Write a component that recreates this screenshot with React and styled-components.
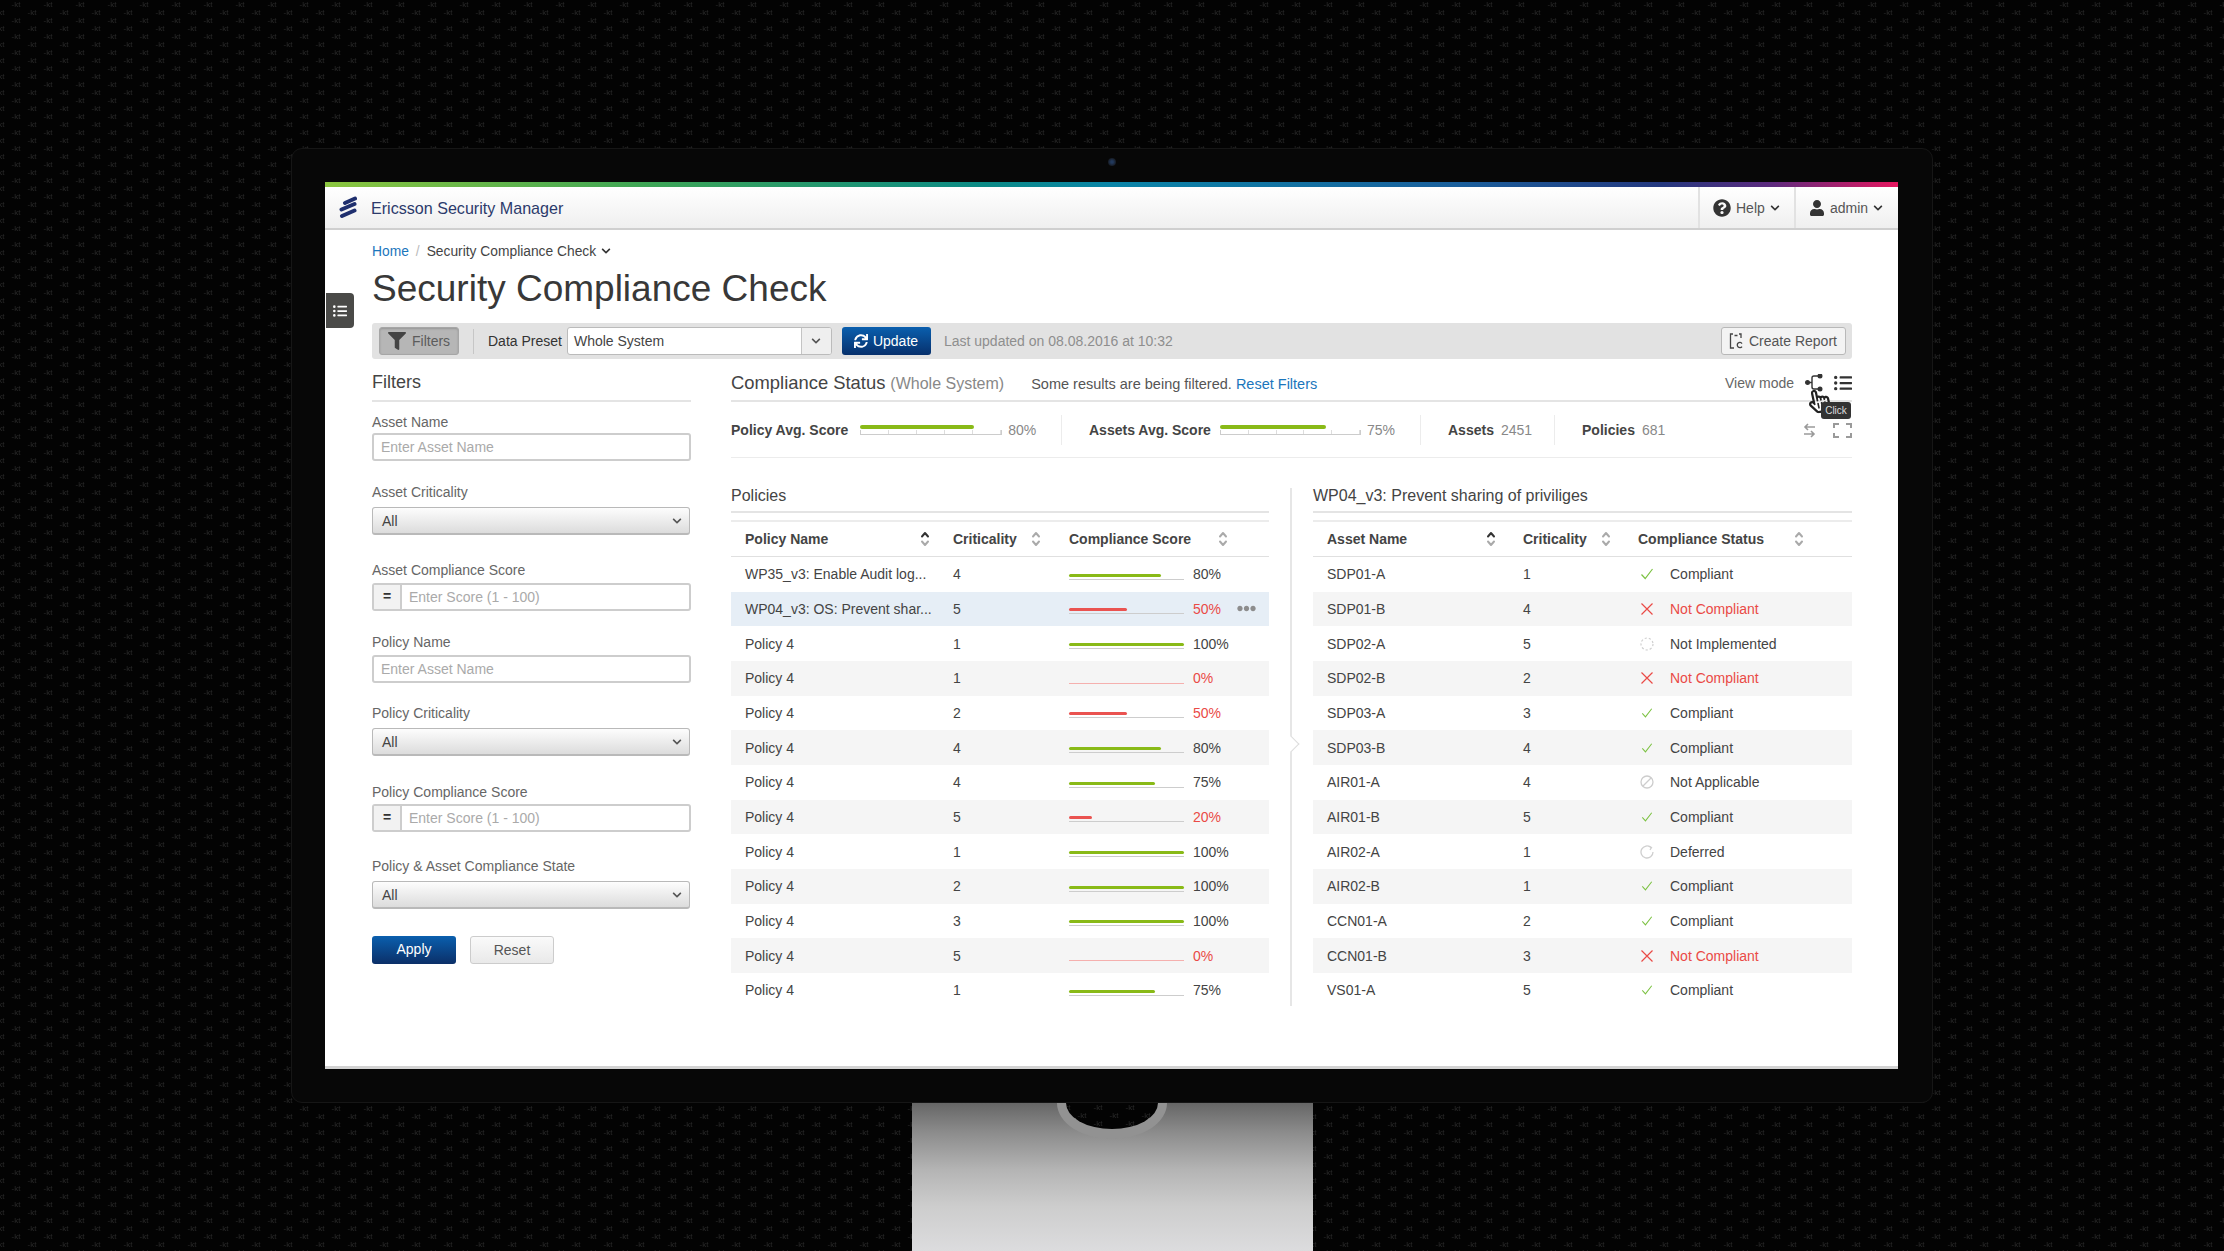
import React from "react";
import styled, { createGlobalStyle } from "styled-components";
import {
  FaChevronDown,
  FaEllipsisH,
  FaFilter,
  FaListUl,
  FaQuestionCircle,
  FaRegHandPointer,
  FaSync,
  FaUser,
} from "react-icons/fa";

const tile = `<svg xmlns="http://www.w3.org/2000/svg" width="32" height="16"><g font-family="Liberation Sans" font-size="8" fill="#282828" text-anchor="middle"><text x="0" y="11">-kt</text><text x="32" y="11">-kt</text><text x="16" y="3">-kt</text><text x="16" y="19">-kt</text></g></svg>`;
const pattern = `url("data:image/svg+xml,${encodeURIComponent(tile)}")`;

const policies = [
  ["WP35_v3: Enable Audit log...", 4, 80],
  ["WP04_v3: OS: Prevent shar...", 5, 50],
  ["Policy 4", 1, 100],
  ["Policy 4", 1, 0],
  ["Policy 4", 2, 50],
  ["Policy 4", 4, 80],
  ["Policy 4", 4, 75],
  ["Policy 4", 5, 20],
  ["Policy 4", 1, 100],
  ["Policy 4", 2, 100],
  ["Policy 4", 3, 100],
  ["Policy 4", 5, 0],
  ["Policy 4", 1, 75],
];

const assets = [
  ["SDP01-A", 1, "ok"],
  ["SDP01-B", 4, "bad"],
  ["SDP02-A", 5, "none"],
  ["SDP02-B", 2, "bad"],
  ["SDP03-A", 3, "ok"],
  ["SDP03-B", 4, "ok"],
  ["AIR01-A", 4, "na"],
  ["AIR01-B", 5, "ok"],
  ["AIR02-A", 1, "later"],
  ["AIR02-B", 1, "ok"],
  ["CCN01-A", 2, "ok"],
  ["CCN01-B", 3, "bad"],
  ["VS01-A", 5, "ok"],
];

const statusText = {
  ok: "Compliant",
  bad: "Not Compliant",
  none: "Not Implemented",
  na: "Not Applicable",
  later: "Deferred",
};

const GlobalStyle = createGlobalStyle`
  html, body {
    margin: 0;
    background: #030303;
    overflow: hidden;
  }
  * {
    box-sizing: border-box;
  }
  body {
    font-family: "Liberation Sans", Arial, sans-serif;
    font-size: 14px;
    color: #444;
  }
`;

const Backdrop = styled.div`
  width: 2224px;
  height: 1251px;
  overflow: hidden;
  padding-top: 148px;
  background-color: #030303;
  background-image: ${pattern};
  background-size: 32px 16px;
  background-position: 0 4px;
`;

const Monitor = styled.div`
  position: relative;
  width: 1642px;
  height: 955px;
  margin-left: 291px;
  padding: 33px;
  background: #070707;
  border: 1px solid #161616;
  border-radius: 11px;
`;

const Camera = styled.span`
  position: absolute;
  left: 816px;
  top: 9px;
  width: 8px;
  height: 8px;
  border-radius: 50%;
  background: radial-gradient(circle, #22395c 20%, #15181e 75%);
`;

const Stand = styled.div`
  position: relative;
  width: 401px;
  height: 148px;
  margin-left: 912px;
  overflow: hidden;
  background: linear-gradient(#666 0%, #8c8c8c 20%, #b4b4b4 45%, #cdcdcd 70%, #dcdcde 100%);
`;

const StandHole = styled.span`
  position: absolute;
  left: 145px;
  top: -36px;
  width: 110px;
  height: 72px;
  border-radius: 50%;
  border: solid #929292;
  border-width: 0 9px 10px;
  background-color: #030303;
  background-image: ${pattern};
  background-size: 32px 16px;
`;

const Screen = styled.div`
  width: 1573px;
  height: 887px;
  background: #fff;
  border-bottom: 3px solid #d2d2d2;
`;

const Rainbow = styled.div`
  height: 5px;
  background: linear-gradient(
    to right,
    #8cc63f 0%,
    #3fa655 20%,
    #0b8a86 42%,
    #0a85a8 50%,
    #1a5f9c 72%,
    #24387f 85%,
    #5d2a7e 92%,
    #e6175f 100%
  );
`;

const TopBar = styled.header`
  display: flex;
  align-items: center;
  height: 43px;
  background: linear-gradient(#fff, #efefef);
  border-bottom: 2px solid #cfcfcf;
`;

const LogoMark = styled.svg`
  width: 18px;
  height: 24px;
  margin-left: 14px;
`;

const Brand = styled.span`
  margin: 2px 0 0 14px;
  font-size: 16.1px;
  color: #2c3a6b;
`;

const TopMenu = styled.div`
  display: flex;
  align-items: center;
  gap: 5px;
  height: 100%;
  width: ${(p) => p.$width}px;
  padding-left: 13px;
  border-left: 2px solid #e2e2e2;
  color: #555;
  margin-left: ${(p) => (p.$first ? "auto" : "0")};
`;

const Content = styled.main`
  position: relative;
  padding: 11px 46px 0 47px;
`;

const SideTab = styled.div`
  position: absolute;
  left: 1px;
  top: 63px;
  width: 28px;
  height: 35px;
  display: flex;
  align-items: center;
  justify-content: center;
  background: #4a4a48;
  border-radius: 0 4px 4px 0;
  color: #fff;
`;

const Breadcrumb = styled.nav`
  display: flex;
  align-items: center;
  gap: 7px;
  height: 20px;
  font-size: 13.8px;
  color: #444;
`;

const Link = styled.span`
  color: #1b76bc;
`;

const Slash = styled.span`
  color: #bbb;
`;

const PageTitle = styled.h1`
  margin: 6px 0 0;
  font-size: 37px;
  line-height: 44px;
  font-weight: 400;
  color: #383838;
`;

const Toolbar = styled.div`
  display: flex;
  align-items: center;
  height: 36px;
  margin-top: 12px;
  padding-left: 7px;
  background: #e2e2e2;
  border-radius: 3px;
`;

const FilterToggle = styled.div`
  display: flex;
  align-items: center;
  gap: 6px;
  width: 80px;
  height: 28px;
  padding-left: 8px;
  background: #b6b6b6;
  border: 1px solid #a6a6a6;
  border-radius: 3px;
  box-shadow: inset 0 1px 2px rgba(0, 0, 0, 0.18);
  color: #5c5c5c;
  svg {
    color: #444;
  }
`;

const ToolDivider = styled.span`
  width: 1px;
  height: 25px;
  margin: 0 14px;
  background: #c6c6c6;
`;

const PresetLabel = styled.span`
  color: #333;
`;

const PresetSelect = styled.div`
  display: flex;
  align-items: center;
  width: 265px;
  height: 28px;
  margin-left: 5px;
  background: #fff;
  border: 1px solid #bbb;
  border-radius: 3px;
  overflow: hidden;
`;

const PresetValue = styled.span`
  flex: 1;
  padding-left: 6px;
`;

const PresetCaret = styled.span`
  display: flex;
  align-items: center;
  justify-content: center;
  width: 30px;
  height: 100%;
  background: #efefef;
  border-left: 1px solid #c4c4c4;
  color: #555;
`;

const UpdateButton = styled.div`
  display: flex;
  align-items: center;
  gap: 5px;
  width: 89px;
  height: 28px;
  margin-left: 10px;
  padding-left: 12px;
  background: linear-gradient(#0a5fae, #07306c);
  border-radius: 3px;
  color: #fff;
`;

const Updated = styled.span`
  margin-left: 13px;
  color: #8e8e8e;
`;

const ReportButton = styled.div`
  display: flex;
  align-items: center;
  gap: 5px;
  width: 125px;
  height: 28px;
  margin: 0 6px 0 auto;
  padding-left: 7px;
  background: #f3f3f3;
  border: 1px solid #b8b8b8;
  border-radius: 3px;
  color: #555;
`;

const Columns = styled.div`
  display: flex;
  gap: 40px;
`;

const FilterColumn = styled.aside`
  width: 319px;
  flex: none;
`;

const MainColumn = styled.section`
  flex: 1;
  min-width: 0;
`;

const SectionHead = styled.div`
  display: flex;
  align-items: baseline;
  height: 43px;
  padding: ${(p) => p.$top}px 0 0;
  border-bottom: 2px solid #e4e4e4;
`;

const SectionTitle = styled.h2`
  margin: 0;
  font-size: ${(p) => p.$size}px;
  line-height: 24px;
  font-weight: 400;
  color: #444;
`;

const SectionNote = styled.span`
  margin-left: 5px;
  font-size: 16px;
  color: #888;
`;

const FilterNotice = styled.span`
  margin-left: 27px;
  font-size: 14.5px;
  color: #555;
`;

const ViewMode = styled.div`
  position: relative;
  display: flex;
  align-items: center;
  align-self: center;
  margin: 0 0 6px auto;
  color: #666;
`;

const ViewIcon = styled.svg`
  width: 18px;
  height: 18px;
  margin-left: ${(p) => p.$gap}px;
  color: #333;
`;

const ListIcon = styled(FaListUl)`
  margin-left: 11px;
  color: #333;
  font-size: 18px;
`;

const Pointer = styled(FaRegHandPointer)`
  position: absolute;
  right: 21px;
  top: 15px;
  font-size: 24px;
  color: #222;
  background: transparent;
  transform: rotate(-12deg);
  z-index: 2;
`;

const Tip = styled.span`
  position: absolute;
  right: 1px;
  top: 28px;
  width: 30px;
  height: 17px;
  background: #333;
  border-radius: 3px;
  color: #ddd;
  font-size: 10px;
  line-height: 17px;
  text-align: center;
  z-index: 3;
`;

const Field = styled.div`
  margin-top: ${(p) => p.$top}px;
`;

const FieldLabel = styled.label`
  display: block;
  height: 16px;
  line-height: 16px;
  margin-bottom: ${(p) => p.$gap}px;
  color: #666;
`;

const TextInput = styled.input`
  display: block;
  width: 100%;
  height: 28px;
  padding: 0 7px;
  border: 2px solid #cdcdcd;
  border-radius: 3px;
  font: inherit;
  outline: none;
  &::placeholder {
    color: #aaa;
    opacity: 1;
  }
`;

const ScoreGroup = styled.div`
  display: flex;
  height: 28px;
  border: 2px solid #cdcdcd;
  border-radius: 3px;
`;

const ScoreOperator = styled.span`
  width: 28px;
  flex: none;
  background: #f2f2f2;
  border-right: 2px solid #cdcdcd;
  text-align: center;
  font-weight: 700;
  line-height: 23px;
  color: #333;
`;

const ScoreInput = styled.input`
  flex: 1;
  min-width: 0;
  padding: 0 7px;
  border: 0;
  background: transparent;
  font: inherit;
  outline: none;
  &::placeholder {
    color: #aaa;
    opacity: 1;
  }
`;

const SelectBox = styled.div`
  display: flex;
  align-items: center;
  justify-content: space-between;
  width: 318px;
  height: 28px;
  padding: 0 7px 0 9px;
  background: linear-gradient(#fdfdfd, #dcdcdc);
  border: 1px solid #b9b9b9;
  border-bottom-width: 2px;
  border-radius: 3px;
  color: #444;
`;

const FormActions = styled.div`
  display: flex;
  gap: 14px;
  margin-top: 27px;
`;

const ApplyButton = styled.div`
  width: 84px;
  height: 28px;
  background: linear-gradient(#0a5fae, #0b2f68);
  border-radius: 3px;
  color: #fff;
  text-align: center;
  line-height: 27px;
`;

const ResetButton = styled.div`
  width: 84px;
  height: 28px;
  background: linear-gradient(#fafafa, #e9e9e9);
  border: 1px solid #ccc;
  border-radius: 3px;
  color: #555;
  text-align: center;
  line-height: 27px;
`;

const StatRow = styled.div`
  display: flex;
  align-items: center;
  height: 56px;
  padding-top: 1px;
  border-bottom: 1px solid #ececec;
`;

const StatCell = styled.div`
  display: flex;
  align-items: center;
  height: 30px;
  width: ${(p) => p.$width}px;
  padding-left: ${(p) => p.$pad}px;
  border-right: ${(p) => (p.$line ? "1px solid #ececec" : "0")};
`;

const StatName = styled.b`
  color: #444;
`;

const StatValue = styled.span`
  margin-left: ${(p) => p.$gap}px;
  color: #888;
`;

const StatBar = styled.div`
  position: relative;
  width: ${(p) => p.$width}px;
  height: 10px;
  margin-left: ${(p) => p.$left}px;
`;

const StatFill = styled.div`
  height: 4px;
  background: #89ba17;
  border-radius: 2px;
`;

const StatAxis = styled.div`
  height: 5px;
  margin-top: 1px;
  border: 1px solid #ccc;
  border-top: 0;
  background: repeating-linear-gradient(to right, transparent 0, transparent calc(20% - 1px), #ddd calc(20% - 1px), #ddd 20%);
`;

const PanelTools = styled.div`
  display: flex;
  align-items: center;
  gap: 17px;
  height: 30px;
  margin-left: auto;
`;

const ToolIcon = styled.svg`
  display: block;
  height: 15px;
  width: ${(p) => p.$width}px;
  color: #9a9a9a;
`;

const PanelRow = styled.div`
  display: flex;
  padding-top: 28px;
`;

const Panel = styled.div`
  flex: none;
  width: ${(p) => p.$width}px;
`;

const PanelDivider = styled.div`
  position: relative;
  flex: none;
  width: 2px;
  height: 518px;
  margin: 2px 21px 0 21px;
  background: #e6e6e6;
`;

const DividerNotch = styled.span`
  position: absolute;
  left: -5px;
  top: 250px;
  width: 12px;
  height: 12px;
  background: #fff;
  border-top: 1px solid #ddd;
  border-right: 1px solid #ddd;
  transform: rotate(45deg);
`;

const PanelTitle = styled.h3`
  margin: 0;
  height: 27px;
  padding-bottom: 5px;
  border-bottom: 2px solid #e4e4e4;
  font-size: 16px;
  line-height: 20px;
  font-weight: 400;
  color: #444;
`;

const TableHead = styled.div`
  display: grid;
  grid-template-columns: ${(p) => p.$cols};
  align-items: center;
  height: 37px;
  margin-top: 7px;
  padding-left: 14px;
  border-top: 2px solid #ececec;
  border-bottom: 1px solid #e0e0e0;
`;

const HeadCell = styled.div`
  display: flex;
  align-items: center;
  justify-content: space-between;
  padding-right: ${(p) => p.$pr}px;
  font-weight: 700;
  color: #444;
`;

const TableRow = styled.div`
  display: grid;
  grid-template-columns: ${(p) => p.$cols};
  align-items: center;
  height: 34.67px;
  padding-left: 14px;
  background: ${(p) => (p.$active ? "#e6eef6" : p.$striped ? "#f5f5f5" : "#fff")};
`;

const ScoreCell = styled.div`
  display: flex;
  align-items: center;
`;

const MiniBar = styled.div`
  width: 115px;
  height: 6px;
  margin-top: 5px;
  border-bottom: 1.5px solid ${(p) => (p.$empty ? "#f5b0ae" : "#cdcdcd")};
`;

const MiniFill = styled.div`
  height: 3px;
  border-radius: 2px;
  background: ${(p) => (p.$low ? "#ea5350" : "#89ba17")};
`;

const Percent = styled.span`
  margin-left: 9px;
  color: ${(p) => (p.$low ? "#ea4a46" : "#444")};
`;

const RowDots = styled(FaEllipsisH)`
  margin: 0 13px 0 auto;
  font-size: 19px;
  color: #8d8d8d;
`;

const StatusCell = styled.div`
  display: flex;
  align-items: center;
  color: ${(p) => (p.$bad ? "#ea4a46" : "#444")};
`;

const StatusSlot = styled.span`
  display: flex;
  align-items: center;
  justify-content: center;
  flex: none;
  width: 18px;
  margin-right: 14px;
`;

const StatusIcon = styled.svg`
  width: ${(p) => p.$size}px;
  height: ${(p) => p.$size}px;
`;

const SortGlyph = styled.svg`
  width: 10px;
  height: 16px;
  flex: none;
`;

function SortIcon({ active }) {
  return (
    <SortGlyph viewBox="0 0 10 16" fill="none" strokeWidth="2" strokeLinecap="round" strokeLinejoin="round">
      <path d="M2 5.5 5 2 8 5.5" stroke={active ? "#333" : "#aaa"} />
      <path d="M2 10.5 5 14 8 10.5" stroke="#aaa" />
    </SortGlyph>
  );
}

function StatusGlyph({ kind, large }) {
  const common = { viewBox: "0 0 14 14", fill: "none", $size: large || kind !== "ok" ? 14 : 12 };
  if (kind === "ok") {
    return (
      <StatusIcon {...common} stroke="#7cc242" strokeWidth="1.2">
        <path d="M1.5 7.5 5.2 11.5 12.5 2" />
      </StatusIcon>
    );
  }
  if (kind === "bad") {
    return (
      <StatusIcon {...common} stroke="#ea4a46" strokeWidth="1.2">
        <path d="M1.5 1.5 12.5 12.5M12.5 1.5 1.5 12.5" />
      </StatusIcon>
    );
  }
  if (kind === "none") {
    return (
      <StatusIcon {...common} stroke="#cfcfcf" strokeWidth="1.2" strokeDasharray="2.2 2">
        <circle cx="7" cy="7" r="6" />
      </StatusIcon>
    );
  }
  if (kind === "na") {
    return (
      <StatusIcon {...common} stroke="#cdcdcd" strokeWidth="1.3">
        <circle cx="7" cy="7" r="6" />
        <path d="M3 11 11 3" />
      </StatusIcon>
    );
  }
  return (
    <StatusIcon {...common} stroke="#cfcfcf" strokeWidth="1.3">
      <path d="M11 2.5A6 6 0 1 0 13 7" />
      <path d="M8.5 1 11.5 2.5 10 5" />
    </StatusIcon>
  );
}

const policyCols = "208px 116px 1fr";
const assetCols = "196px 115px 1fr";

function App() {
  return (
    <Backdrop>
      <GlobalStyle />
      <Monitor>
        <Camera />
        <Screen>
          <Rainbow />
          <TopBar>
            <LogoMark viewBox="0 0 18 24" fill="none" stroke="#1f2f6e" strokeWidth="4" strokeLinecap="round">
              <path d="M6 7 16 2.5M2.5 13.5 15.5 8M3 20 15.5 14.5" />
            </LogoMark>
            <Brand>Ericsson Security Manager</Brand>
            <TopMenu $first $width={96}>
              <FaQuestionCircle size={18} color="#333" />
              Help
              <FaChevronDown size={10} color="#333" />
            </TopMenu>
            <TopMenu $width={104}>
              <FaUser size={16} color="#333" />
              admin
              <FaChevronDown size={10} color="#333" />
            </TopMenu>
          </TopBar>
          <Content>
            <SideTab>
              <FaListUl size={14} />
            </SideTab>
            <Breadcrumb>
              <Link>Home</Link>
              <Slash>/</Slash>
              <span>Security Compliance Check</span>
              <FaChevronDown size={10} color="#333" style={{ marginLeft: -2 }} />
            </Breadcrumb>
            <PageTitle>Security Compliance Check</PageTitle>
            <Toolbar>
              <FilterToggle>
                <FaFilter size={18} />
                Filters
              </FilterToggle>
              <ToolDivider />
              <PresetLabel>Data Preset</PresetLabel>
              <PresetSelect>
                <PresetValue>Whole System</PresetValue>
                <PresetCaret>
                  <FaChevronDown size={10} />
                </PresetCaret>
              </PresetSelect>
              <UpdateButton>
                <FaSync size={14} />
                Update
              </UpdateButton>
              <Updated>Last updated on 08.08.2016 at 10:32</Updated>
              <ReportButton>
                <svg width="15" height="16" viewBox="0 0 15 16" fill="none" stroke="#444" strokeWidth="1.3">
                  <path d="M4 1H1.5V15H5M10 1H12V5M5.5 2.5H8.5" />
                  <path d="M13 10.5A2.6 2.6 0 1 0 13 13.5" />
                </svg>
                Create Report
              </ReportButton>
            </Toolbar>
            <Columns>
              <FilterColumn>
                <SectionHead $top={11}>
                  <SectionTitle $size={18}>Filters</SectionTitle>
                </SectionHead>
                <Field $top={12}>
                  <FieldLabel $gap={3}>Asset Name</FieldLabel>
                  <TextInput placeholder="Enter Asset Name" />
                </Field>
                <Field $top={23}>
                  <FieldLabel $gap={7}>Asset Criticality</FieldLabel>
                  <SelectBox>
                    All
                    <FaChevronDown size={10} color="#555" />
                  </SelectBox>
                </Field>
                <Field $top={27}>
                  <FieldLabel $gap={5}>Asset Compliance Score</FieldLabel>
                  <ScoreGroup>
                    <ScoreOperator>=</ScoreOperator>
                    <ScoreInput placeholder="Enter Score (1 - 100)" />
                  </ScoreGroup>
                </Field>
                <Field $top={23}>
                  <FieldLabel $gap={5}>Policy Name</FieldLabel>
                  <TextInput placeholder="Enter Asset Name" />
                </Field>
                <Field $top={22}>
                  <FieldLabel $gap={7}>Policy Criticality</FieldLabel>
                  <SelectBox>
                    All
                    <FaChevronDown size={10} color="#555" />
                  </SelectBox>
                </Field>
                <Field $top={28}>
                  <FieldLabel $gap={4}>Policy Compliance Score</FieldLabel>
                  <ScoreGroup>
                    <ScoreOperator>=</ScoreOperator>
                    <ScoreInput placeholder="Enter Score (1 - 100)" />
                  </ScoreGroup>
                </Field>
                <Field $top={26}>
                  <FieldLabel $gap={7}>Policy &amp; Asset Compliance State</FieldLabel>
                  <SelectBox>
                    All
                    <FaChevronDown size={10} color="#555" />
                  </SelectBox>
                </Field>
                <FormActions>
                  <ApplyButton>Apply</ApplyButton>
                  <ResetButton>Reset</ResetButton>
                </FormActions>
              </FilterColumn>
              <MainColumn>
                <SectionHead $top={12}>
                  <SectionTitle $size={18.4}>Compliance Status</SectionTitle>
                  <SectionNote>(Whole System)</SectionNote>
                  <FilterNotice>
                    Some results are being filtered. <Link>Reset Filters</Link>
                  </FilterNotice>
                  <ViewMode>
                    View mode
                    <ViewIcon $gap={11} viewBox="0 0 18 18" fill="none" stroke="currentColor" strokeWidth="1.4">
                      <circle cx="2.5" cy="8.5" r="1.8" fill="currentColor" />
                      <circle cx="15" cy="2" r="1.8" fill="currentColor" />
                      <circle cx="15" cy="15" r="1.8" fill="currentColor" />
                      <path d="M2.5 8.5H7M7 13V4Q7 2 9 2H15M7 13Q7 15 9 15H15" />
                    </ViewIcon>
                    <ListIcon />
                    <Pointer />
                    <Tip>Click</Tip>
                  </ViewMode>
                </SectionHead>
                <StatRow>
                  <StatCell $width={331} $line>
                    <StatName>Policy Avg. Score</StatName>
                    <StatBar $width={142} $left={12}>
                      <StatFill style={{ width: "80%" }} />
                      <StatAxis />
                    </StatBar>
                    <StatValue $gap={6}>80%</StatValue>
                  </StatCell>
                  <StatCell $width={359} $pad={27} $line>
                    <StatName>Assets Avg. Score</StatName>
                    <StatBar $width={141} $left={9}>
                      <StatFill style={{ width: "75%" }} />
                      <StatAxis />
                    </StatBar>
                    <StatValue $gap={6}>75%</StatValue>
                  </StatCell>
                  <StatCell $width={134} $pad={27} $line>
                    <StatName>Assets</StatName>
                    <StatValue $gap={7}>2451</StatValue>
                  </StatCell>
                  <StatCell $width={150} $pad={27}>
                    <StatName>Policies</StatName>
                    <StatValue $gap={7}>681</StatValue>
                  </StatCell>
                  <PanelTools>
                    <ToolIcon $width={13} viewBox="0 0 13 15" fill="none" stroke="currentColor" strokeWidth="1.6">
                      <path d="M12 4H2M5 1 2 4 5 7M1 11H11M8 8 11 11 8 14" />
                    </ToolIcon>
                    <ToolIcon $width={19} viewBox="0 0 19 15" fill="none" stroke="currentColor" strokeWidth="2">
                      <path d="M6 1H1V5M13 1H18V5M1 10V14H6M18 10V14H13" />
                    </ToolIcon>
                  </PanelTools>
                </StatRow>
                <PanelRow>
                  <Panel $width={538}>
                    <PanelTitle>Policies</PanelTitle>
                    <TableHead $cols={policyCols}>
                      <HeadCell $pr={23}>
                        Policy Name
                        <SortIcon active />
                      </HeadCell>
                      <HeadCell $pr={28}>
                        Criticality
                        <SortIcon />
                      </HeadCell>
                      <HeadCell $pr={41}>
                        Compliance Score
                        <SortIcon />
                      </HeadCell>
                    </TableHead>
                    {policies.map(([name, level, score], i) => (
                      <TableRow key={i} $cols={policyCols} $active={i === 1} $striped={i % 2 === 1}>
                        <span>{name}</span>
                        <span>{level}</span>
                        <ScoreCell>
                          <MiniBar $empty={score === 0}>
                            <MiniFill $low={score <= 50} style={{ width: `${score}%` }} />
                          </MiniBar>
                          <Percent $low={score <= 50}>{score}%</Percent>
                          {i === 1 && <RowDots />}
                        </ScoreCell>
                      </TableRow>
                    ))}
                  </Panel>
                  <PanelDivider>
                    <DividerNotch />
                  </PanelDivider>
                  <Panel $width={539}>
                    <PanelTitle>WP04_v3: Prevent sharing of priviliges</PanelTitle>
                    <TableHead $cols={assetCols}>
                      <HeadCell $pr={27}>
                        Asset Name
                        <SortIcon active />
                      </HeadCell>
                      <HeadCell $pr={27}>
                        Criticality
                        <SortIcon />
                      </HeadCell>
                      <HeadCell $pr={48}>
                        Compliance Status
                        <SortIcon />
                      </HeadCell>
                    </TableHead>
                    {assets.map(([name, level, status], i) => (
                      <TableRow key={name} $cols={assetCols} $striped={i % 2 === 1}>
                        <span>{name}</span>
                        <span>{level}</span>
                        <StatusCell $bad={status === "bad"}>
                          <StatusSlot>
                            <StatusGlyph kind={status} large={i === 0} />
                          </StatusSlot>
                          {statusText[status]}
                        </StatusCell>
                      </TableRow>
                    ))}
                  </Panel>
                </PanelRow>
              </MainColumn>
            </Columns>
          </Content>
        </Screen>
      </Monitor>
      <Stand>
        <StandHole />
      </Stand>
    </Backdrop>
  );
}

export default App;
